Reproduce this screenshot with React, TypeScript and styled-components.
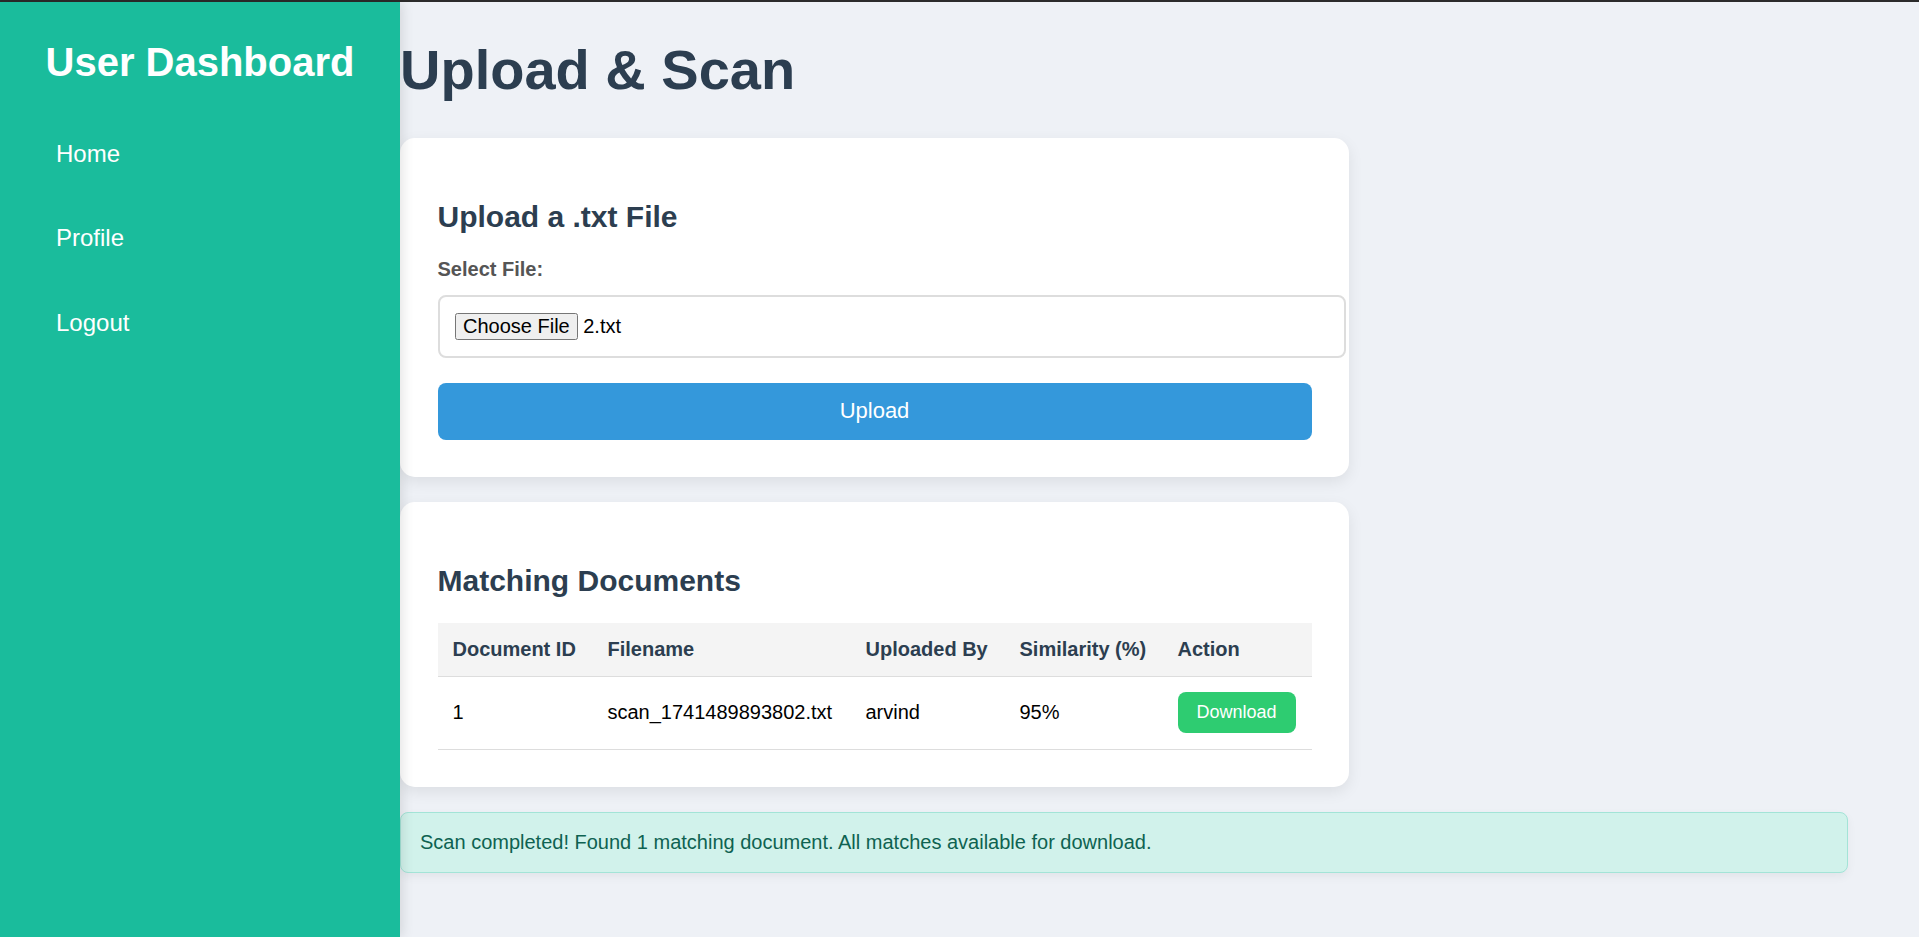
import React from 'react';
import styled, { createGlobalStyle } from 'styled-components';

const GlobalStyle = createGlobalStyle`
  body {
    margin: 0;
    background: #eef1f6;
    font-family: 'Liberation Sans', Arial, sans-serif;
  }
`;

const Page = styled.div`
  display: flex;
  min-height: 935px;
  border-top: 2px solid #2b2b2b;
`;

const Sidebar = styled.aside`
  width: 400px;
  flex-shrink: 0;
  background: #1abc9c;
  color: #ffffff;
  position: relative;
  z-index: 1;
  box-shadow: 2px 0 12px rgba(0, 0, 0, 0.12);
`;

const SidebarTitle = styled.h2`
  margin: 0;
  padding-top: 38px;
  font-size: 40px;
  font-weight: bold;
  text-align: center;
`;

const NavList = styled.ul`
  list-style: none;
  margin: 36px 0 0;
  padding: 0 31px;
  display: flex;
  flex-direction: column;
  gap: 19px;
`;

const NavLink = styled.a`
  display: block;
  padding: 18.75px 25px;
  color: #ffffff;
  text-decoration: none;
  font-size: 24px;
`;

const Main = styled.main`
  flex: 1;
  min-width: 0;
  padding: 0 71px 60px 0;
`;

const PageTitle = styled.h1`
  margin: 35px 0 35.5px;
  font-size: 56px;
  font-weight: bold;
  color: #2c3e50;
`;

const Card = styled.section`
  width: 949px;
  box-sizing: border-box;
  padding: 37.5px;
  margin-bottom: 25px;
  background: #ffffff;
  border-radius: 15px;
  box-shadow: 0 5px 15px rgba(0, 0, 0, 0.08);
`;

const CardTitle = styled.h2`
  margin: 24.5px 0;
  font-size: 30px;
  font-weight: bold;
  color: #2c3e50;
`;

const FieldLabel = styled.label`
  display: block;
  margin-bottom: 14px;
  font-size: 20px;
  font-weight: bold;
  color: #555555;
`;

const FileBox = styled.div`
  width: 100%;
  display: flex;
  align-items: center;
  gap: 5px;
  padding: 15.5px 15px;
  margin-bottom: 25px;
  border: 2px solid #dddddd;
  border-radius: 8px;
  font-size: 20px;
  color: #000000;
`;

const ChooseButton = styled.button`
  padding: 1.25px 7.5px;
  border: 1.25px solid #767676;
  border-radius: 2.5px;
  background: #efefef;
  color: #000000;
  font-family: inherit;
  font-size: 20px;
  line-height: normal;
`;

const UploadButton = styled.button`
  width: 100%;
  display: block;
  padding: 15.5px;
  border: none;
  border-radius: 8px;
  background: #3498db;
  color: #ffffff;
  font-family: inherit;
  font-size: 22px;
  line-height: normal;
  cursor: pointer;
`;

const Table = styled.table`
  width: 100%;
  border-collapse: collapse;
  table-layout: fixed;
  font-size: 20px;
`;

const HeadCell = styled.th<{ $width: number }>`
  width: ${(p) => p.$width}px;
  padding: 15px;
  text-align: left;
  font-weight: bold;
  color: #2c3e50;
  background: #f4f4f4;
  border-bottom: 1px solid #dddddd;
  white-space: nowrap;
`;

const BodyCell = styled.td`
  padding: 15.5px 15px;
  color: #000000;
  border-bottom: 1px solid #dddddd;
  vertical-align: middle;
  white-space: nowrap;
`;

const DownloadButton = styled.button`
  padding: 10px 19px;
  border: none;
  border-radius: 8px;
  background: #2ecc71;
  color: #ffffff;
  font-family: inherit;
  font-size: 18px;
  line-height: normal;
  cursor: pointer;
`;

const Alert = styled.div`
  margin-top: 1.5px;
  padding: 18px 19px;
  border: 1px solid #a3e4d7;
  border-radius: 8px;
  background: #d1f2eb;
  color: #0e6251;
  font-size: 20px;
  box-shadow: 0 4px 10px rgba(0, 0, 0, 0.05);
`;

// widths are content widths, each cell adds 30px of padding
const columns = [
  { label: 'Document ID', width: 125 },
  { label: 'Filename', width: 228 },
  { label: 'Uploaded By', width: 124 },
  { label: 'Similarity (%)', width: 128 },
  { label: 'Action', width: 119 },
];

const matches = [
  { id: 1, filename: 'scan_1741489893802.txt', uploadedBy: 'arvind', similarity: 95 },
];

const App = () => {
  return (
    <>
      <GlobalStyle />
      <Page>
        <Sidebar>
          <SidebarTitle>User Dashboard</SidebarTitle>
          <nav>
            <NavList>
              <li>
                <NavLink href="#">Home</NavLink>
              </li>
              <li>
                <NavLink href="#">Profile</NavLink>
              </li>
              <li>
                <NavLink href="#">Logout</NavLink>
              </li>
            </NavList>
          </nav>
        </Sidebar>

        <Main>
          <PageTitle>Upload &amp; Scan</PageTitle>

          <Card>
            <CardTitle>Upload a .txt File</CardTitle>
            <FieldLabel>Select File:</FieldLabel>
            <FileBox>
              <ChooseButton type="button">Choose File</ChooseButton>
              <span>2.txt</span>
            </FileBox>
            <UploadButton type="button">Upload</UploadButton>
          </Card>

          <Card>
            <CardTitle>Matching Documents</CardTitle>
            <Table>
              <thead>
                <tr>
                  {columns.map((col) => (
                    <HeadCell key={col.label} $width={col.width}>
                      {col.label}
                    </HeadCell>
                  ))}
                </tr>
              </thead>
              <tbody>
                {matches.map((doc) => (
                  <tr key={doc.id}>
                    <BodyCell>{doc.id}</BodyCell>
                    <BodyCell>{doc.filename}</BodyCell>
                    <BodyCell>{doc.uploadedBy}</BodyCell>
                    <BodyCell>{doc.similarity}%</BodyCell>
                    <BodyCell>
                      <DownloadButton type="button">Download</DownloadButton>
                    </BodyCell>
                  </tr>
                ))}
              </tbody>
            </Table>
          </Card>

          <Alert>
            Scan completed! Found 1 matching document. All matches available for download.
          </Alert>
        </Main>
      </Page>
    </>
  );
};

export default App;
